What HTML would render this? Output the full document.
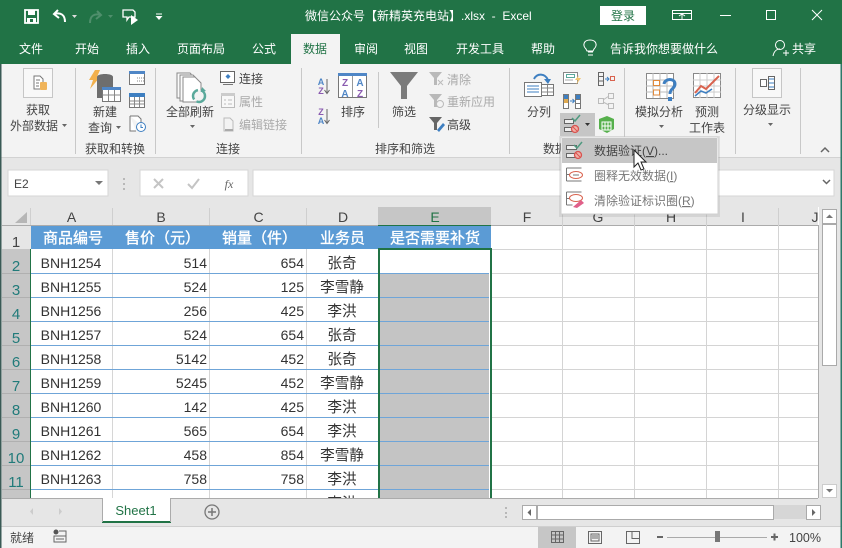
<!DOCTYPE html>
<html><head><meta charset="utf-8"><style>
html,body{margin:0;padding:0;background:#e6e6e6}
body{width:842px;height:548px;overflow:hidden}
svg{display:block;font-family:"Liberation Sans","Noto Sans CJK SC",sans-serif}
.r{font-size:12px;fill:#444}
.d{font-size:12px;fill:#aaa}
.m{text-anchor:middle}
.w{font-size:12px;fill:#fff}
.c{font-size:14px;fill:#333}
.cj{font-size:14.6px;fill:#333;text-anchor:middle}
.e{text-anchor:end}
.h{font-size:15px;fill:#fff;stroke:#fff;stroke-width:.35px}
.l{font-size:14px;fill:#444;text-anchor:middle}
.n{font-size:15px;fill:#217b7a;text-anchor:middle}
</style></head><body>
<svg width="842" height="548" viewBox="0 0 842 548" xmlns="http://www.w3.org/2000/svg">
<rect width="842" height="548" fill="#e6e6e6"/>
<!-- title + tabs -->
<rect width="842" height="64" fill="#217346"/>
<rect x="291" y="34" width="49" height="30" fill="#f3f3f3"/>
<!-- QAT -->
<path d="M25 10h13v13H25z" fill="none" stroke="#fff" stroke-width="1.800"/><rect x="28" y="10" width="7" height="5" fill="#fff"/><rect x="27" y="18" width="9" height="5" fill="#fff"/><rect x="30" y="19" width="3" height="3" fill="#217346"/>
<path d="M58 10l-4 4 5 4M54 14c7-2 11 1 11 8" fill="none" stroke="#fff" stroke-width="2"/><path d="M72 15h5l-2.500 3z" fill="#ddd"/>
<path d="M97 11l4 4-5 4M101 15c-7-2-11 1-11 8" fill="none" stroke="#4f8f6c" stroke-width="2"/><path d="M108 15h5l-2.500 3z" fill="#4f8f6c"/>
<path d="M123 10h10l2 2v5l-3 0-3 0-2 3v-3h-4z" fill="none" stroke="#fff" stroke-width="1.300"/><path d="M131 15l7 5-7 5z" fill="#fff"/>
<path d="M156 14h6" stroke="#fff"/><path d="M155.500 16h7l-3.500 4z" fill="#fff"/>
<text x="305" y="20" class="w">微信公众号【新精英充电站】.xlsx&#160; -&#160; Excel</text>
<rect x="600" y="6" width="46" height="19" fill="#fff"/><text x="623" y="20" class="m" style="font-size:12px;fill:#217346">登录</text>
<path d="M672.500 10.500h19v9h-19zM672.500 13.500h19M679 16l3-2 3 2M682 14v5" fill="none" stroke="#fff"/>
<rect x="720" y="15" width="11" height="1" fill="#fff"/>
<rect x="766.500" y="10.500" width="9" height="9" fill="none" stroke="#fff"/>
<path d="M812 10l10 10M822 10l-10 10" stroke="#fff" fill="none"/>
<text x="31" y="53" class="w m">文件</text><text x="87" y="53" class="w m">开始</text><text x="138" y="53" class="w m">插入</text><text x="201" y="53" class="w m">页面布局</text><text x="264" y="53" class="w m">公式</text>
<text x="315" y="53" class="m" style="font-size:12px;fill:#217346">数据</text>
<text x="366" y="53" class="w m">审阅</text><text x="416" y="53" class="w m">视图</text><text x="480" y="53" class="w m">开发工具</text><text x="543" y="53" class="w m">帮助</text>
<path d="M588 52h5M588 55h5M586 49c-4-4-2-9 4-9s8 5 4 9l-1 2h-6z" fill="none" stroke="#fff"/>
<text x="610" y="53" class="w">告诉我你想要做什么</text>
<circle cx="780" cy="45" r="4.500" fill="none" stroke="#fff"/><path d="M773 56c1-5 4-7 7-7M783 53h6M786 50v6" fill="none" stroke="#fff"/>
<text x="792" y="53" class="w">共享</text>
<!-- ribbon -->
<rect y="64" width="842" height="93" fill="#f3f3f3"/><rect y="157" width="842" height="1" fill="#d2d2d2"/>
<g fill="#c8c8c8"><rect x="75" y="68" width="1" height="86"/><rect x="155" y="68" width="1" height="86"/><rect x="301" y="68" width="1" height="86"/><rect x="509" y="68" width="1" height="86"/><rect x="624" y="68" width="1" height="86"/><rect x="735" y="68" width="1" height="86"/><rect x="800" y="68" width="1" height="86"/><rect x="378" y="72" width="1" height="56"/></g>
<!-- get external -->
<rect x="23.500" y="68.500" width="29" height="29" fill="#f8f8f8" stroke="#c6c6c6"/>
<path d="M34 76h6l3 3v10h-9zM36 80h4M36 83h3M36 86h3" fill="#fff" stroke="#777"/><rect x="40" y="82" width="7" height="8" rx="1" fill="#f0b45a"/>
<text x="38" y="114" class="r m">获取</text><text x="10" y="130" class="r">外部数据</text><path d="M62 124h5l-2.500 3z" fill="#666"/>
<!-- new query -->
<path d="M95 70h5l-3 7h3l-10 12 3-9h-4z" fill="#f2b04c"/>
<path d="M97 77c0-4 16-4 16 0v21H97z" fill="#6e6e6e"/>
<rect x="102.500" y="87.500" width="18" height="14" fill="#fff" stroke="#777"/><rect x="102" y="87" width="19" height="3" fill="#4f86c6"/><path d="M102.500 95h18M108.500 90v11M114.500 90v11" stroke="#888"/>
<text x="105" y="116" class="r m">新建</text><text x="100" y="132" class="r m">查询</text><path d="M116 126h5l-2.500 3z" fill="#666"/>
<rect x="129.500" y="71.500" width="15" height="13" fill="#fff" stroke="#777"/><rect x="129" y="71" width="16" height="3" fill="#4f86c6"/><path d="M137 78h7M137 81h7" stroke="#888" stroke-dasharray="1 1"/>
<rect x="129.500" y="93.500" width="15" height="14" fill="#fff" stroke="#777"/><rect x="129" y="93" width="16" height="4" fill="#3e7fc1"/><path d="M130 101h14M130 104h14M134.500 97v10M139.500 97v10" stroke="#888"/>
<path d="M130 116h8l3 3v6M130 116v15h6" fill="#fff" stroke="#777"/><circle cx="141" cy="127" r="4.500" fill="#fff" stroke="#3e7fc1"/><path d="M141 124.500v3h2" fill="none" stroke="#3e7fc1"/>
<text x="115" y="153" class="r m">获取和转换</text>
<!-- refresh -->
<path d="M177 73h13l1 1v24h-14z" fill="#fbfbfb" stroke="#888"/><path d="M180 75h13l2 2v24h-15z" fill="#fbfbfb" stroke="#888"/><path d="M183 77h12l6 6v19h-18z" fill="#fff" stroke="#888"/>
<circle cx="199" cy="96" r="6" fill="#f3f3f3" stroke="#5aa99b" stroke-width="2.500" stroke-dasharray="12 3"/><path d="M202 87l4 4-5 1z" fill="#5aa99b"/>
<text x="190" y="116" class="r m">全部刷新</text><path d="M190 125h5l-2.500 3z" fill="#666"/>
<rect x="220.500" y="71.500" width="14" height="11" fill="#fff" stroke="#666"/><path d="M228 74l2.500 2.500-2.500 2.500-2.500-2.500z" fill="#3e7fc1"/><rect x="223" y="84" width="10" height="1" fill="#777"/>
<text x="239" y="83" class="r">连接</text>
<rect x="221.500" y="94.500" width="13" height="13" fill="#f8f8f8" stroke="#bbb"/><rect x="221" y="93" width="14" height="3" fill="#ccc"/><path d="M224 100h2M228 100h4M224 104h2M228 104h4" stroke="#bbb"/>
<text x="239" y="106" class="d">属性</text>
<path d="M224 118h6l3 3v10h-9z" fill="none" stroke="#bbb"/><path d="M225 130h8" stroke="#aaa" stroke-width="2"/>
<text x="239" y="129" class="d">编辑链接</text>
<text x="228" y="153" class="r m">连接</text>
<!-- sort -->
<text x="321" y="85" style="font-size:9px;font-weight:700;fill:#4f86c6" class="m">A</text><text x="321" y="94" style="font-size:9px;font-weight:700;fill:#8a5bb0" class="m">Z</text><path d="M327 79v14M324.500 90l2.500 3.500 2.500-3.500" fill="none" stroke="#666"/>
<text x="321" y="115" style="font-size:9px;font-weight:700;fill:#8a5bb0" class="m">Z</text><text x="321" y="124" style="font-size:9px;font-weight:700;fill:#4f86c6" class="m">A</text><path d="M327 109v14M324.500 120l2.500 3.500 2.500-3.500" fill="none" stroke="#666"/>
<rect x="338.500" y="73.500" width="28" height="24" fill="#fff" stroke="#777"/><rect x="338" y="73" width="29" height="3" fill="#4f86c6"/><path d="M352.500 76v21" stroke="#999"/>
<text x="345" y="86" style="font-size:10px;font-weight:700;fill:#8a5bb0" class="m">Z</text><text x="345" y="97" style="font-size:10px;font-weight:700;fill:#4f86c6" class="m">A</text><text x="360" y="86" style="font-size:10px;font-weight:700;fill:#4f86c6" class="m">A</text><text x="360" y="97" style="font-size:10px;font-weight:700;fill:#8a5bb0" class="m">Z</text>
<text x="353" y="116" class="r m">排序</text>
<path d="M390 72h28l-11 14v13h-6V86z" fill="#7b7b7b"/><text x="404" y="116" class="r m">筛选</text>
<path d="M429 72h13l-5 6v7h-3v-7z" fill="#b9b9b9"/><path d="M438 80l5 5M443 80l-5 5" stroke="#bbb"/><text x="447" y="84" class="d">清除</text>
<path d="M429 94h13l-5 6v7h-3v-7z" fill="#b9b9b9"/><circle cx="440" cy="104" r="3.500" fill="none" stroke="#bbb"/><text x="447" y="106" class="d">重新应用</text>
<path d="M429 117h13l-5 6v7h-3v-7z" fill="#666"/><path d="M437 130l6-7 2 2-6 7z" fill="#3e7fc1"/><text x="447" y="129" class="r">高级</text>
<text x="405" y="153" class="r m">排序和筛选</text>
<!-- data tools -->
<rect x="524.500" y="82.500" width="17" height="14" fill="#fff" stroke="#777"/><path d="M527 86h12M527 89h12M527 92h12" stroke="#3e7fc1"/>
<rect x="541.500" y="84.500" width="12" height="11" fill="#fff" stroke="#777"/><path d="M542 88h11M542 92h11M547.500 85v10" stroke="#888"/>
<path d="M534 79c3-6 11-6 14 1" fill="none" stroke="#3e7fc1" stroke-width="2"/><path d="M544 79h7l-3 5z" fill="#3e7fc1"/>
<text x="539" y="116" class="r m">分列</text>
<rect x="563.500" y="72.500" width="14" height="11" fill="#fff" stroke="#888"/><rect x="566.500" y="74.500" width="8" height="3" fill="#fff" stroke="#5aa99b"/><path d="M565 80h8" stroke="#aaa"/><path d="M579 75l-4 5h3l-2 5 5-7h-3z" fill="#f2c46c"/>
<rect x="563.500" y="94.500" width="5" height="14" fill="#fff" stroke="#777"/><rect x="564" y="95" width="4" height="4" fill="#3e7fc1"/><rect x="564" y="99" width="4" height="4" fill="#e0aa50"/><rect x="575.500" y="94.500" width="5" height="14" fill="#fff" stroke="#777"/><rect x="576" y="95" width="4" height="4" fill="#3e7fc1"/><path d="M576 99.500h4M576 103.500h4" stroke="#777"/><path d="M570 101h4M572.500 99l2 2-2 2" fill="none" stroke="#3e7fc1"/>
<rect x="560" y="113" width="35" height="23" fill="#c6c6c6"/>
<path d="M564.500 119.500h9v4h-9zM564.500 127.500h9v4h-9z" fill="#eee" stroke="#666"/><path d="M572 118l3 3 5-6" fill="none" stroke="#4f9a80" stroke-width="1.500"/><circle cx="575" cy="129" r="3.500" fill="#f0b0a8" stroke="#d9534f" stroke-width="1.300"/><path d="M573 127l4 4" stroke="#d9534f"/>
<path d="M585 123h5l-2.500 3z" fill="#333"/>
<path d="M598.500 72.500h5v13h-5zM599 76.500h4M599 81h4" fill="none" stroke="#666"/><path d="M605 79h4M607 77l2 2-2 2" fill="none" stroke="#3e7fc1"/><rect x="610.500" y="76.500" width="4" height="4" fill="none" stroke="#d9634f"/>
<rect x="598.500" y="98.500" width="5" height="5" fill="none" stroke="#bbb"/><rect x="608.500" y="93.500" width="5" height="5" fill="none" stroke="#bbb"/><rect x="608.500" y="103.500" width="5" height="5" fill="none" stroke="#bbb"/><path d="M603 100l6-4M603 102l6 3" stroke="#bbb"/>
<path d="M599 119l8-3 7 3v10l-7 4-8-4z" fill="#56b04c"/><path d="M602 122h9v8h-9zM605 122v8M608 122v8M602 126h9" fill="none" stroke="#fff"/>
<text x="543" y="153" class="r">数据工具</text>
<!-- forecast -->
<rect x="646.500" y="73.500" width="27" height="25" fill="#fff" stroke="#888"/><path d="M646 80h28M646 86h28M646 92h28M653 73v25M660 73v25M667 73v25" stroke="#bbb"/>
<rect x="653.500" y="80.500" width="6" height="5" fill="#fff" stroke="#e08a3c"/><rect x="653.500" y="90" width="6" height="5" fill="#fff" stroke="#e08a3c"/>
<path d="M664 84c1-6 11-6 11 0 0 5-5 4-5 10" fill="none" stroke="#3e7fc1" stroke-width="3"/><rect x="668" y="97" width="4" height="4" fill="#3e7fc1"/>
<text x="659" y="116" class="r m">模拟分析</text><path d="M659 125h5l-2.500 3z" fill="#666"/>
<rect x="693.500" y="73.500" width="27" height="24" fill="#fff" stroke="#888"/><path d="M693 80h28M693 86h28M693 92h28M700 73v25M707 73v25M714 73v25" stroke="#ccc"/>
<path d="M695 93l6-7 5 3 6-6 7-7" fill="none" stroke="#d9634f" stroke-width="2"/><path d="M695 96l6-5 5 2 6-4" fill="none" stroke="#3e7fc1" stroke-width="1.500"/>
<text x="707" y="116" class="r m">预测</text><text x="707" y="132" class="r m">工作表</text>
<!-- outline -->
<rect x="752.500" y="68.500" width="29" height="29" fill="#f8f8f8" stroke="#c6c6c6"/><rect x="760.500" y="79.500" width="6" height="7" fill="#fff" stroke="#666"/><rect x="768.500" y="76.500" width="6" height="13" fill="#fff" stroke="#666"/><path d="M769 79h5M769 83h5M769 87h5" stroke="#3e7fc1"/>
<text x="767" y="114" class="r m">分级显示</text><path d="M768 123h5l-2.500 3z" fill="#666"/>
<path d="M821 152l4-4 4 4" fill="none" stroke="#666" stroke-width="1.500"/>
<!-- formula bar -->
<rect x="8" y="170" width="100" height="26" fill="#fff" stroke="#d6d6d6"/><text x="14" y="188" style="font-size:12px;fill:#444">E2</text><path d="M95 181h8l-4 4z" fill="#777"/>
<circle cx="124" cy="179" r="1" fill="#aaa"/><circle cx="124" cy="184" r="1" fill="#aaa"/><circle cx="124" cy="189" r="1" fill="#aaa"/>
<rect x="140" y="170" width="108" height="26" fill="#fff" stroke="#d6d6d6"/>
<path d="M154 179l9 9M163 179l-9 9" stroke="#c4c4c4" stroke-width="2" fill="none"/><path d="M188 184l4 4 7-9" stroke="#c4c4c4" stroke-width="2" fill="none"/>
<text x="229" y="188" class="m" style="font-family:'Liberation Serif',serif;font-style:italic;font-size:12px;fill:#666">fx</text>
<rect x="253" y="170" width="581" height="26" fill="#fff" stroke="#d6d6d6"/><path d="M823 180l3.500 3.500 3.500-3.500" fill="none" stroke="#666" stroke-width="1.500"/>
<!-- grid bg -->
<rect x="2" y="207" width="818" height="291" fill="#fff"/>
<rect x="2" y="207" width="29" height="42" fill="#e6e6e6"/><rect x="2" y="207" width="816" height="18" fill="#e6e6e6"/>
<rect x="378" y="207" width="113" height="18" fill="#c6c6c6"/>
<rect x="2" y="249" width="28" height="249" fill="#c6c6c6"/>
<path d="M27 212v11H15z" fill="#b6b6b6"/>
<g fill="#cfcfcf"><rect x="30" y="208" width="1" height="17"/><rect x="112" y="208" width="1" height="17"/><rect x="209" y="208" width="1" height="17"/><rect x="306" y="208" width="1" height="17"/><rect x="562" y="208" width="1" height="17"/><rect x="634" y="208" width="1" height="17"/><rect x="706" y="208" width="1" height="17"/><rect x="778" y="208" width="1" height="17"/></g>
<rect x="2" y="225" width="816" height="1" fill="#ababab"/>
<!-- F+ gridlines -->
<g fill="#d4d4d4"><rect x="562" y="225" width="1" height="273"/><rect x="634" y="225" width="1" height="273"/><rect x="706" y="225" width="1" height="273"/><rect x="778" y="225" width="1" height="273"/>
<rect x="491" y="249" width="327" height="1"/><rect x="491" y="273" width="327" height="1"/><rect x="491" y="297" width="327" height="1"/><rect x="491" y="321" width="327" height="1"/><rect x="491" y="345" width="327" height="1"/><rect x="491" y="369" width="327" height="1"/><rect x="491" y="393" width="327" height="1"/><rect x="491" y="417" width="327" height="1"/><rect x="491" y="441" width="327" height="1"/><rect x="491" y="465" width="327" height="1"/><rect x="491" y="489" width="327" height="1"/></g>
<rect x="818" y="225" width="1" height="273" fill="#ababab"/>
<!-- table -->
<rect x="31" y="226" width="460" height="23" fill="#5b9bd5"/>
<rect x="380" y="274" width="109" height="224" fill="#c4c4c4"/>
<g fill="#d6d6d6"><rect x="112" y="249" width="1" height="249"/><rect x="209" y="249" width="1" height="249"/><rect x="306" y="249" width="1" height="249"/></g>
<g fill="#6fa5d8"><rect x="31" y="273" width="458" height="1"/><rect x="31" y="297" width="458" height="1"/><rect x="31" y="321" width="458" height="1"/><rect x="31" y="345" width="458" height="1"/><rect x="31" y="369" width="458" height="1"/><rect x="31" y="393" width="458" height="1"/><rect x="31" y="417" width="458" height="1"/><rect x="31" y="441" width="458" height="1"/><rect x="31" y="465" width="458" height="1"/><rect x="31" y="489" width="458" height="1"/></g>
<!-- selection -->
<g fill="#217346"><rect x="378" y="225" width="113" height="1"/><rect x="378" y="248" width="114" height="2"/><rect x="378" y="248" width="2" height="250"/><rect x="490" y="248" width="2" height="250"/><rect x="30" y="249" width="1" height="249"/></g>
<!-- row header sep -->
<g fill="#b0b0b0"><rect x="2" y="273" width="28" height="1"/><rect x="2" y="297" width="28" height="1"/><rect x="2" y="321" width="28" height="1"/><rect x="2" y="345" width="28" height="1"/><rect x="2" y="369" width="28" height="1"/><rect x="2" y="393" width="28" height="1"/><rect x="2" y="417" width="28" height="1"/><rect x="2" y="441" width="28" height="1"/><rect x="2" y="465" width="28" height="1"/><rect x="2" y="489" width="28" height="1"/></g>
<!-- letters -->
<text x="71.500" y="222" class="l">A</text><text x="161" y="222" class="l">B</text><text x="258.500" y="222" class="l">C</text><text x="343" y="222" class="l">D</text><text x="435" y="222" class="l" style="fill:#217346">E</text><text x="527" y="222" class="l">F</text><text x="598" y="222" class="l">G</text><text x="671" y="222" class="l">H</text><text x="743" y="222" class="l">I</text><text x="815" y="222" class="l">J</text>
<text x="16" y="247" class="n" style="fill:#444">1</text><text x="16" y="271" class="n">2</text><text x="16" y="295" class="n">3</text><text x="16" y="319" class="n">4</text><text x="16" y="343" class="n">5</text><text x="16" y="367" class="n">6</text><text x="16" y="391" class="n">7</text><text x="16" y="415" class="n">8</text><text x="16" y="439" class="n">9</text><text x="16" y="463" class="n">10</text><text x="16" y="487" class="n">11</text>
<text x="43" y="243" class="h">商品编号</text><text x="125" y="243" class="h">售价（元）</text><text x="222" y="243" class="h">销量（件）</text><text x="320" y="243" class="h">业务员</text><text x="390" y="243" class="h">是否需要补货</text>
<g>
<text x="71" y="268" class="c m">BNH1254</text><text x="207" y="268" class="c e">514</text><text x="304" y="268" class="c e">654</text><text x="342" y="268" class="cj">张奇</text>
<text x="71" y="292" class="c m">BNH1255</text><text x="207" y="292" class="c e">524</text><text x="304" y="292" class="c e">125</text><text x="342" y="292" class="cj">李雪静</text>
<text x="71" y="316" class="c m">BNH1256</text><text x="207" y="316" class="c e">256</text><text x="304" y="316" class="c e">425</text><text x="342" y="316" class="cj">李洪</text>
<text x="71" y="340" class="c m">BNH1257</text><text x="207" y="340" class="c e">524</text><text x="304" y="340" class="c e">654</text><text x="342" y="340" class="cj">张奇</text>
<text x="71" y="364" class="c m">BNH1258</text><text x="207" y="364" class="c e">5142</text><text x="304" y="364" class="c e">452</text><text x="342" y="364" class="cj">张奇</text>
<text x="71" y="388" class="c m">BNH1259</text><text x="207" y="388" class="c e">5245</text><text x="304" y="388" class="c e">452</text><text x="342" y="388" class="cj">李雪静</text>
<text x="71" y="412" class="c m">BNH1260</text><text x="207" y="412" class="c e">142</text><text x="304" y="412" class="c e">425</text><text x="342" y="412" class="cj">李洪</text>
<text x="71" y="436" class="c m">BNH1261</text><text x="207" y="436" class="c e">565</text><text x="304" y="436" class="c e">654</text><text x="342" y="436" class="cj">李洪</text>
<text x="71" y="460" class="c m">BNH1262</text><text x="207" y="460" class="c e">458</text><text x="304" y="460" class="c e">854</text><text x="342" y="460" class="cj">李雪静</text>
<text x="71" y="484" class="c m">BNH1263</text><text x="207" y="484" class="c e">758</text><text x="304" y="484" class="c e">758</text><text x="342" y="484" class="cj">李洪</text>
<text x="71" y="508" class="c m">BNH1264</text><text x="207" y="508" class="c e">745</text><text x="304" y="508" class="c e">654</text><text x="342" y="508" class="cj">李洪</text>
</g>
<!-- vertical scrollbar -->
<rect x="819" y="207" width="23" height="291" fill="#e6e6e6"/>
<rect x="822.500" y="209.500" width="14" height="14" fill="#fff" stroke="#aaa"/><path d="M826 218h7l-3.500-3.500z" fill="#777"/>
<rect x="822.500" y="224.500" width="14" height="141" fill="#fff" stroke="#aaa"/>
<rect x="822.500" y="484.500" width="14" height="13" fill="#fff" stroke="#ccc"/><path d="M826 489h7l-3.500 3.500z" fill="#777"/>
<!-- sheet bar -->
<rect y="498" width="842" height="29" fill="#e6e6e6"/><rect x="2" y="498" width="816" height="1" fill="#ababab"/>
<path d="M33 508v7l-3-3.500zM59 508v7l3-3.500z" fill="#ccc"/>
<rect x="102" y="498" width="69" height="25" fill="#fff"/><rect x="102" y="521" width="69" height="2" fill="#217346"/><rect x="102" y="498" width="1" height="24" fill="#ababab"/><rect x="170" y="498" width="1" height="24" fill="#ababab"/>
<text x="136" y="515" class="m" style="font-size:13px;fill:#217346">Sheet1</text>
<circle cx="212" cy="512" r="7" fill="none" stroke="#777" stroke-width="1.300"/><path d="M208 512h8M212 508v8" stroke="#777" stroke-width="1.500"/>
<circle cx="506" cy="508" r="1" fill="#aaa"/><circle cx="506" cy="513" r="1" fill="#aaa"/><circle cx="506" cy="517" r="1" fill="#aaa"/>
<rect x="773" y="505" width="33" height="14" fill="#d6d6d6"/>
<rect x="522.500" y="505.500" width="14" height="14" fill="#fff" stroke="#aaa"/><path d="M531 509v7l-3.500-3.500z" fill="#666"/>
<rect x="537.500" y="505.500" width="236" height="14" fill="#fff" stroke="#aaa"/>
<rect x="806.500" y="505.500" width="14" height="14" fill="#fff" stroke="#aaa"/><path d="M812 509v7l3.500-3.500z" fill="#666"/>
<!-- status -->
<rect y="526" width="842" height="22" fill="#f3f3f3"/><rect y="526" width="842" height="1" fill="#cfcfcf"/>
<text x="10" y="542" class="r">就绪</text>
<circle cx="56" cy="532" r="2.500" fill="#555"/><path d="M59 531h7v11H54v-6h12M56 539h8" fill="none" stroke="#666"/>
<rect x="538" y="527" width="38" height="21" fill="#c6c6c6"/>
<path d="M551.500 531.500h12v11h-12zM551.500 535h12M551.500 539h12M555.500 531.500v11M559.500 531.500v11" fill="none" stroke="#666"/>
<path d="M588.500 531.500h13v12h-13zM591 534h8v7h-8zM592 536h6M592 538h6" fill="none" stroke="#666"/>
<path d="M626.500 531.500h13v12h-13zM632 531.500v7h7" fill="none" stroke="#666"/>
<rect x="657" y="536" width="6" height="2" fill="#666"/><rect x="667" y="537" width="100" height="1" fill="#aaa"/><rect x="715" y="531" width="5" height="11" fill="#777"/>
<path d="M771 537h7M774.500 533.500v7" stroke="#666" stroke-width="2"/>
<text x="789" y="542" style="font-size:12.500px;fill:#444">100%</text>
<!-- dropdown -->
<rect x="559" y="136" width="161" height="81" fill="#000" opacity=".08"/>
<rect x="561" y="137" width="157" height="77" fill="#fff" stroke="#d0d0d0"/>
<rect x="562" y="138" width="155" height="25" fill="#c6c6c6"/>
<path d="M566.500 145.500h10v4h-10zM566.500 153.500h10v4h-10z" fill="#eee" stroke="#666"/><path d="M574 145l3 3 5-6" fill="none" stroke="#4f9a80" stroke-width="1.500"/><circle cx="578" cy="155" r="3.500" fill="#f0b0a8" stroke="#d9534f" stroke-width="1.300"/><path d="M576 153l4 4" stroke="#d9534f"/>
<text x="594" y="155" style="font-size:12px;fill:#444">数据验证(<tspan text-decoration="underline">V</tspan>)...</text>
<path d="M566.500 168v13M566.500 168h15M566.500 181h15M566.500 174.500h4" fill="none" stroke="#777"/><ellipse cx="576" cy="175" rx="6.500" ry="3.500" fill="#fff" stroke="#d9634f"/><path d="M573 175h6" stroke="#777"/>
<text x="594" y="180" style="font-size:12px;fill:#777">圈释无效数据(<tspan text-decoration="underline">I</tspan>)</text>
<path d="M566.500 192v13M566.500 192h15M566.500 205h6M566.500 198.500h4" fill="none" stroke="#777"/><ellipse cx="576" cy="198" rx="6.500" ry="3.500" fill="#fff" stroke="#d9634f"/><path d="M573 207l8-7 3 3-7 5z" fill="#e0608a"/>
<text x="594" y="205" style="font-size:12px;fill:#777">清除验证标识圈(<tspan text-decoration="underline">R</tspan>)</text>
<!-- cursor -->
<path d="M634 150v17l4-4 3 7 3-1-3-7h5z" fill="#fff" stroke="#222" stroke-width="1"/>
<!-- edges -->
<rect x="0" y="64" width="1.500" height="484" fill="#3a5a55"/><rect x="840.500" y="64" width="1.500" height="484" fill="#2e7a6a"/>
</svg>
</body></html>
